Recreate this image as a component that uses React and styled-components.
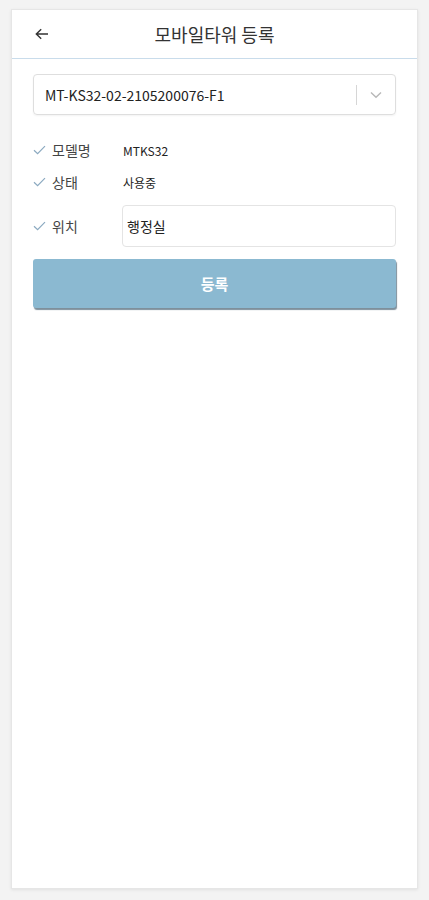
import React, {useState} from 'react';
import styled, {createGlobalStyle} from 'styled-components';

const GlobalStyle = createGlobalStyle`
  html, body {
    margin: 0;
    padding: 0;
    background: #f3f3f3;
    font-family: "Noto Sans CJK KR", "Noto Sans", sans-serif;
  }
  * { box-sizing: border-box; }
`

// STYLED COMPONENTS START
const Page = styled.div`
  padding: 9px 11px 12px 11px;
`

const Card = styled.div`
  min-height: 880px;
  background: #fff;
  border: 1px solid #e6e6e6;
  box-shadow: 0 1px 3px rgba(0, 0, 0, 0.08);
`

const Header = styled.header`
  height: 49px;
  display: flex;
  align-items: center;
  position: relative;
  border-bottom: 1px solid #c9dceb;
`

const BackButton = styled.button`
  position: absolute;
  left: 20px;
  top: 14px;
  width: 20px;
  height: 20px;
  padding: 0;
  border: none;
  background: none;
  display: flex;
  align-items: center;
  justify-content: center;
`

const Title = styled.h1`
  flex: 1;
  margin: 0;
  text-align: center;
  font-size: 18px;
  font-weight: 400;
  color: #333;
`

const Content = styled.div`
  padding: 15px 21px 0 21px;
`

const Select = styled.div`
  height: 41px;
  display: flex;
  align-items: center;
  border: 1px solid #dedede;
  border-radius: 4px;
  box-shadow: 0 1px 2px rgba(0, 0, 0, 0.05);
  margin-bottom: 19px;
`

const SelectValue = styled.span`
  flex: 1;
  padding-left: 11px;
  font-size: 14px;
  color: #222;
`

const SelectDivider = styled.span`
  width: 1px;
  height: 20px;
  background: #d6d6d6;
`

const SelectArrow = styled.span`
  width: 38px;
  display: flex;
  align-items: center;
  justify-content: center;
`

const Row = styled.div`
  display: flex;
  align-items: center;
  min-height: ${p => (p.$tall ? '42px' : '32px')};
  margin-top: ${p => (p.$tall ? '7px' : '0')};
`

const Label = styled.span`
  width: 89px;
  display: flex;
  align-items: center;
  gap: 6px;
  font-size: 14px;
  color: #444;
`

const Value = styled.span`
  font-size: 12px;
  color: #222;
  padding-left: 1px;
`

const TextInput = styled.input`
  flex: 1;
  height: 42px;
  border: 1px solid #e4e4e4;
  border-radius: 4px;
  padding: 0 4px;
  font-family: inherit;
  font-size: 14px;
  color: #222;
  outline: none;
`

const SubmitButton = styled.button`
  width: 100%;
  height: 49px;
  margin-top: 12px;
  border: none;
  border-radius: 3px;
  background: #8bb9d1;
  box-shadow: 1px 2px 1px rgba(40, 70, 90, 0.6);
  color: #fff;
  font-family: inherit;
  font-size: 15px;
  font-weight: 700;
`
// STYLED COMPONENTS END

const Check = () => (
  <svg width="13" height="10" viewBox="0 0 13 10" fill="none">
    <path d="M1 5.2 L4.6 8.6 L12 1.2" stroke="#8ba9c0" strokeWidth="1.2" />
  </svg>
)

const App = () => {
  const [location, setLocation] = useState('행정실');

  return (
    <Page>
      <GlobalStyle />
      <Card>
        <Header>
          <BackButton aria-label="back">
            <svg width="14" height="12" viewBox="0 0 14 12" fill="none">
              <path d="M13 6 H1.5 M6.2 1.2 L1.3 6 L6.2 10.8" stroke="#333" strokeWidth="1.4" />
            </svg>
          </BackButton>
          <Title>모바일타워 등록</Title>
        </Header>
        <Content>
          <Select>
            <SelectValue>MT-KS32-02-2105200076-F1</SelectValue>
            <SelectDivider />
            <SelectArrow>
              <svg width="12" height="8" viewBox="0 0 12 8" fill="none">
                <path d="M1 1.5 L6 6.3 L11 1.5" stroke="#b8b8b8" strokeWidth="1.4" />
              </svg>
            </SelectArrow>
          </Select>
          <Row>
            <Label><Check />모델명</Label>
            <Value>MTKS32</Value>
          </Row>
          <Row>
            <Label><Check />상태</Label>
            <Value>사용중</Value>
          </Row>
          <Row $tall>
            <Label><Check />위치</Label>
            <TextInput value={location} onChange={e => setLocation(e.target.value)} />
          </Row>
          <SubmitButton type="button">등록</SubmitButton>
        </Content>
      </Card>
    </Page>
  )
}

export default App;
